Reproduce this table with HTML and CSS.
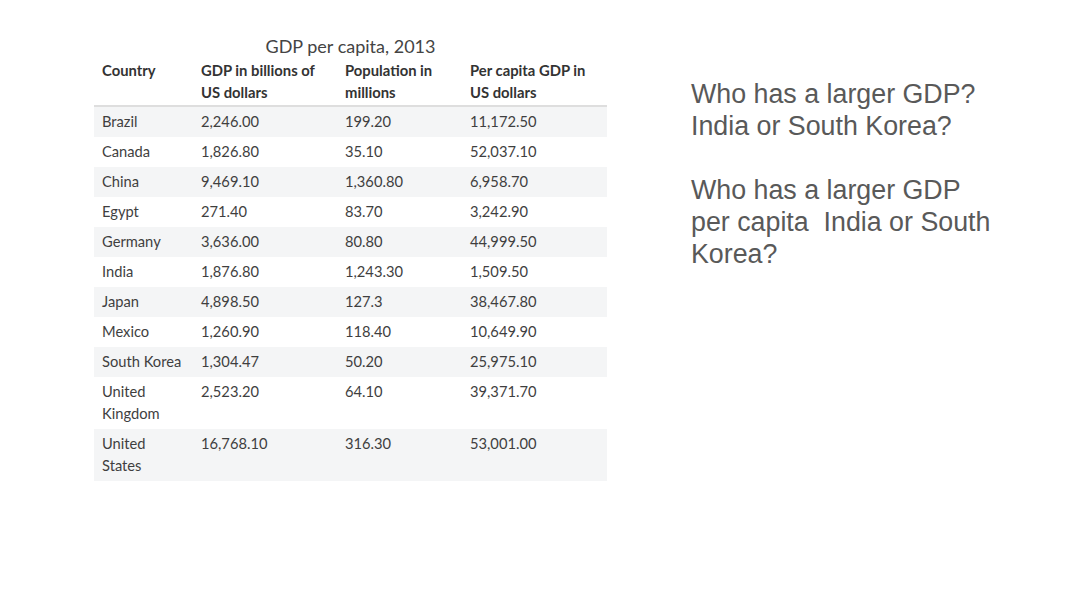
FILE: index.html
```html
<!DOCTYPE html>
<html>
<head>
<meta charset="utf-8">
<link rel="stylesheet" href="styles.css">
</head>
<body>
<div class="slide">
  <div class="table-wrap">
    <div class="caption">GDP per capita, 2013</div>
    <table class="gdp">
      <colgroup>
        <col class="c1"><col class="c2"><col class="c3"><col class="c4">
      </colgroup>
      <thead>
        <tr>
          <th>Country</th>
          <th>GDP in billions of US dollars</th>
          <th>Population in millions</th>
          <th>Per capita GDP in US dollars</th>
        </tr>
      </thead>
      <tbody>
        <tr><td>Brazil</td><td>2,246.00</td><td>199.20</td><td>11,172.50</td></tr>
        <tr><td>Canada</td><td>1,826.80</td><td>35.10</td><td>52,037.10</td></tr>
        <tr><td>China</td><td>9,469.10</td><td>1,360.80</td><td>6,958.70</td></tr>
        <tr><td>Egypt</td><td>271.40</td><td>83.70</td><td>3,242.90</td></tr>
        <tr><td>Germany</td><td>3,636.00</td><td>80.80</td><td>44,999.50</td></tr>
        <tr><td>India</td><td>1,876.80</td><td>1,243.30</td><td>1,509.50</td></tr>
        <tr><td>Japan</td><td>4,898.50</td><td>127.3</td><td>38,467.80</td></tr>
        <tr><td>Mexico</td><td>1,260.90</td><td>118.40</td><td>10,649.90</td></tr>
        <tr><td>South Korea</td><td>1,304.47</td><td>50.20</td><td>25,975.10</td></tr>
        <tr><td>United Kingdom</td><td>2,523.20</td><td>64.10</td><td>39,371.70</td></tr>
        <tr><td>United States</td><td>16,768.10</td><td>316.30</td><td>53,001.00</td></tr>
      </tbody>
    </table>
  </div>
  <div class="questions">
    <p>Who has a larger GDP?<br>India or South Korea?</p>
    <p>Who has a larger GDP per capita&nbsp; India or South Korea?</p>
  </div>
</div>
</body>
</html>
```

FILE: styles.css
```css
html, body {
  margin: 0;
  padding: 0;
  background: #ffffff;
}
.slide {
  width: 1080px;
  height: 607px;
  display: flex;
  align-items: flex-start;
}
.table-wrap {
  margin-left: 94px;
  margin-top: 34px;
  width: 513px;
  font-family: Lato, "Open Sans", sans-serif;
}
.caption {
  text-align: center;
  font-size: 18px;
  line-height: 24px;
  color: #444444;
  margin-bottom: 1px;
}
.gdp {
  width: 513px;
  border-collapse: collapse;
  table-layout: fixed;
  font-size: 14.7px;
  color: #3f3f3f;
}
.c1 { width: 99px; }
.c2 { width: 144px; }
.c3 { width: 125px; }
.c4 { width: 145px; }
.gdp th {
  text-align: left;
  vertical-align: top;
  font-weight: 700;
  font-size: 14.8px;
  color: #333333;
  line-height: 22px;
  padding: 0 8px 2px 8px;
  border-bottom: 2px solid #dedede;
}
.gdp td {
  vertical-align: top;
  line-height: 22px;
  padding: 3px 8px 5px 8px;
}
.gdp tbody tr:nth-child(odd) td {
  background: #f4f5f6;
}
.questions {
  margin-left: 84px;
  margin-top: 78px;
  width: 310px;
  font-family: "Liberation Sans", Arial, sans-serif;
  font-size: 26.8px;
  line-height: 32px;
  color: #595959;
}
.questions p {
  margin: 0 0 32px 0;
}
```
